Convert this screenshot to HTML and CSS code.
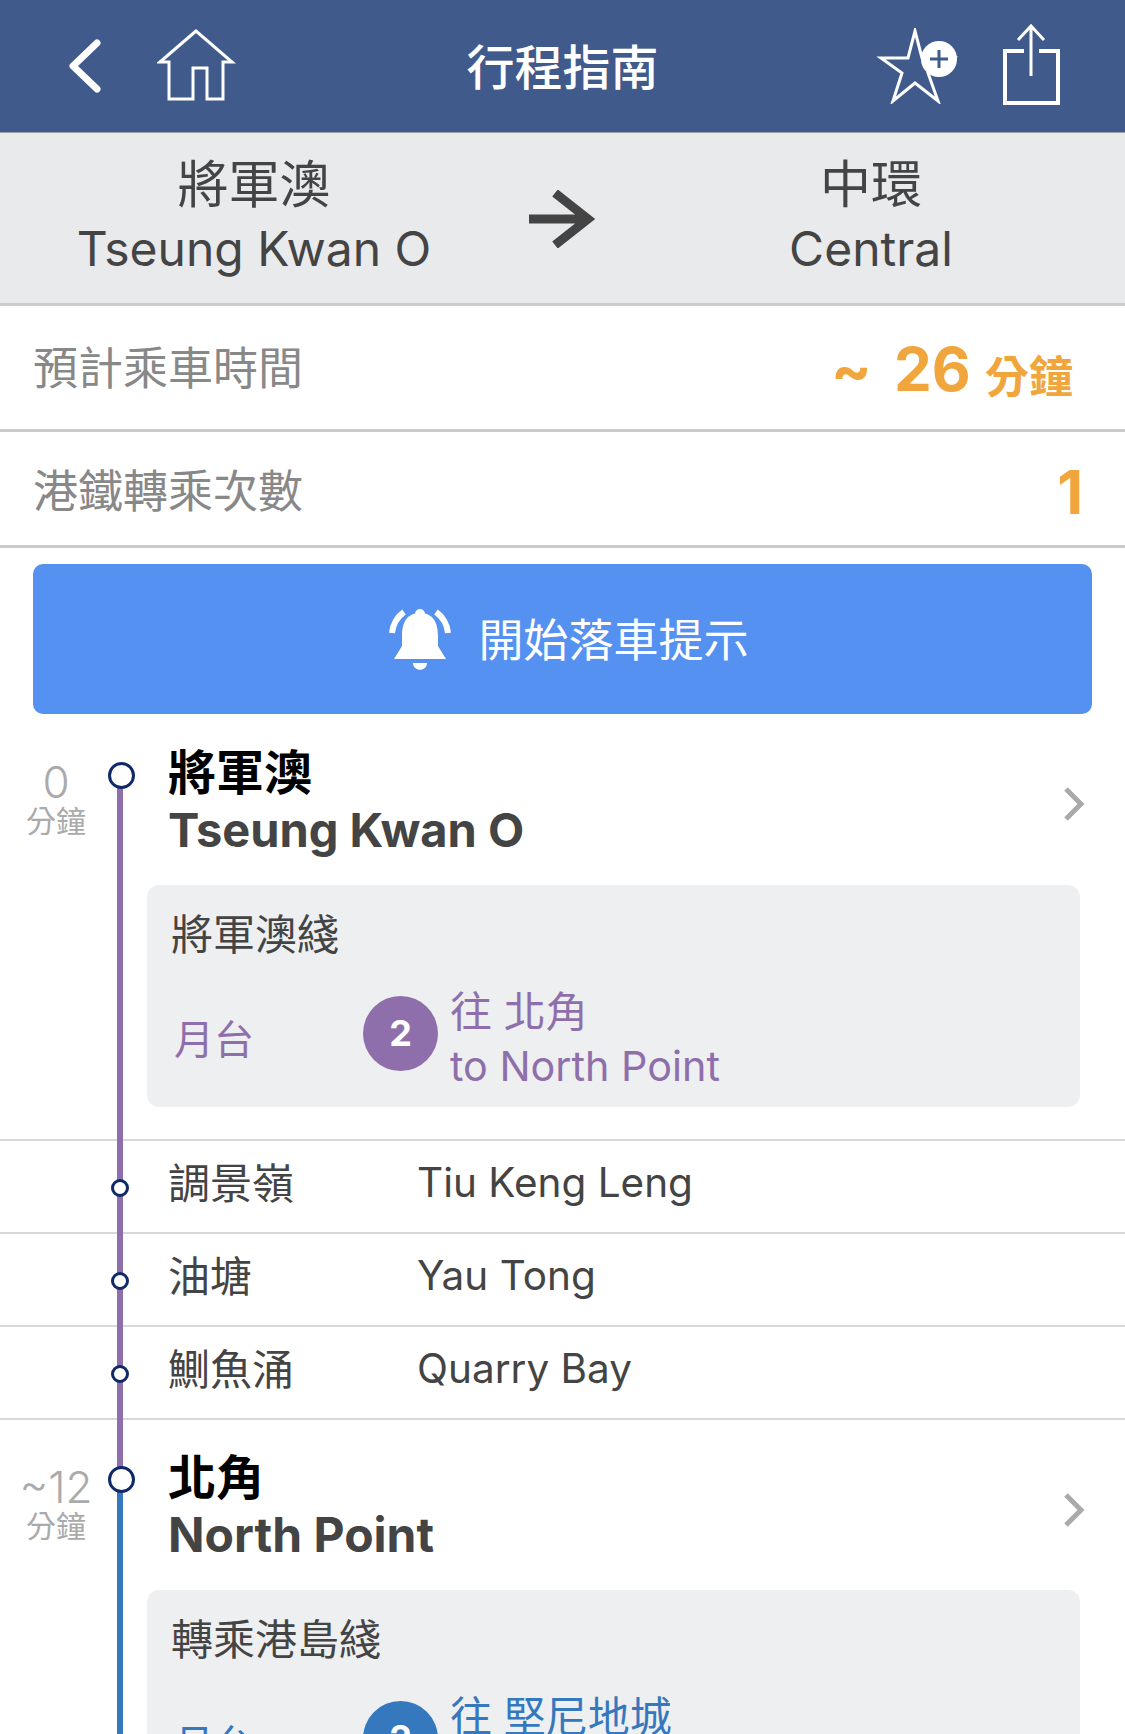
FILE: index.html
```html
<!DOCTYPE html>
<html lang="zh-Hant">
  <head>
    <meta charset="UTF-8" />
    <title>行程指南</title>
    <link rel="stylesheet" href="styles.css">
  </head>
  <body>
    <header class="topbar">
      <div class="topbar-left">
        <svg class="icon-back" width="42" height="56" viewBox="0 0 42 56">
          <path d="M32 5 L8 28 L32 51" fill="none" stroke="#fff" stroke-width="7" stroke-linecap="round" stroke-linejoin="round" />
        </svg>
        <svg class="icon-home" width="84" height="74" viewBox="0 0 84 74">
          <path d="M39 3 L3 34 H12 V71 H36 V40 H50 V71 H66 V34 H75 Z" fill="none" stroke="#fff" stroke-width="3" />
        </svg>
      </div>
      <h1 class="topbar-title">行程指南</h1>
      <div class="topbar-right">
        <svg class="icon-star" width="83" height="76" viewBox="0 0 83 76">
          <path d="M40 3 L47 30 H78 L53 45 L63 73 L40 55 L18 73 L27 45 L6 30 H33 Z" fill="none" stroke="#fff" stroke-width="3" />
          <circle cx="64" cy="31" r="18" fill="#fff" />
          <path d="M55 31 H73 M64 22 V40" fill="none" stroke="#3f5a8b" stroke-width="3" />
        </svg>
        <svg class="icon-share" width="63" height="86" viewBox="0 0 63 86">
          <path d="M24 29 H5 V81 H58 V29 H39" fill="none" stroke="#fff" stroke-width="4" />
          <path d="M31 4 V54 M18 18 L31 4 L44 18" fill="none" stroke="#fff" stroke-width="3" />
        </svg>
      </div>
    </header>

    <section class="route">
      <div class="route-stop"><span class="route-zh">將軍澳</span><br>Tseung Kwan O</div>
      <svg class="route-arrow" width="70" height="58" viewBox="0 0 70 58">
        <path d="M1 29 H58 M27 3 L60 29 L27 55" fill="none" stroke="#444" stroke-width="9" />
      </svg>
      <div class="route-stop"><span class="route-zh">中環</span><br>Central</div>
    </section>

    <div class="stat stat-time">
      <span class="stat-label">預計乘車時間</span>
      <span class="stat-value"><span class="tilde">~</span> 26 <small>分鐘</small></span>
    </div>
    <div class="stat stat-count">
      <span class="stat-label">港鐵轉乘次數</span>
      <span class="stat-value">1</span>
    </div>

    <div class="alert-wrap">
      <button class="alert-btn">
        <svg width="64" height="68" viewBox="0 0 64 68">
          <circle cx="32" cy="8" r="5" fill="#fff" />
          <path d="M32 7 C18 7 14 18 14 30 V40 L6 53 H58 L50 40 V30 C50 18 46 7 32 7 Z" fill="#fff" />
          <path d="M25 57 H39 C39 66 25 66 25 57 Z" fill="#fff" />
          <path d="M16 6 C9 11 5 18 4 27 M48 6 C55 11 59 18 60 27" fill="none" stroke="#fff" stroke-width="6" />
        </svg>
        <span>開始落車提示</span>
      </button>
    </div>

    <section class="leg leg-purple">
      <div class="station">
        <div class="station-time"><b>0</b><span>分鐘</span></div>
        <div class="dot-big"></div>
        <div class="station-name">將軍澳<br><em>Tseung Kwan O</em></div>
        <svg class="chevron" width="24" height="38" viewBox="0 0 24 38">
          <path d="M4 4 L19 19 L4 34" fill="none" stroke="#aaa" stroke-width="5" />
        </svg>
      </div>
      <div class="card">
        <div class="card-title">將軍澳綫</div>
        <div class="platform">
          <span class="platform-label">月台</span>
          <span class="platform-no">2</span>
          <span class="platform-dest">往 北角<br><em>to North Point</em></span>
        </div>
      </div>
      <ul class="stops">
        <li><i class="dot-small"></i><span class="stop-zh">調景嶺</span><span class="stop-en">Tiu Keng Leng</span></li>
        <li><i class="dot-small"></i><span class="stop-zh">油塘</span><span class="stop-en">Yau Tong</span></li>
        <li><i class="dot-small"></i><span class="stop-zh">鰂魚涌</span><span class="stop-en">Quarry Bay</span></li>
      </ul>
    </section>

    <section class="leg leg-blue">
      <div class="station">
        <div class="station-time"><b>~12</b><span>分鐘</span></div>
        <div class="dot-big"></div>
        <div class="station-name">北角<br><em>North Point</em></div>
        <svg class="chevron" width="24" height="38" viewBox="0 0 24 38">
          <path d="M4 4 L19 19 L4 34" fill="none" stroke="#aaa" stroke-width="5" />
        </svg>
      </div>
      <div class="card">
        <div class="card-title">轉乘港島綫</div>
        <div class="platform">
          <span class="platform-label">月台</span>
          <span class="platform-no">2</span>
          <span class="platform-dest">往 堅尼地城<br><em>to Kennedy Town</em></span>
        </div>
      </div>
    </section>
  </body>
</html>
```

FILE: styles.css
```css
* {
  margin: 0;
  padding: 0;
  box-sizing: border-box;
  font-family: Inter, "Noto Sans CJK TC", sans-serif;
}

html, body {
  height: 1734px;
  overflow: hidden;
  background: white;
}

svg {
  display: block;
  flex: none;
}

.topbar {
  display: grid;
  grid-template-columns: 1fr auto 1fr;
  align-items: center;
  height: 133px;
  background: #3f5a8b;
  border-bottom: 1px solid #9a9da3;
}

.topbar-left {
  display: flex;
  align-items: center;
  gap: 50px;
  padding-left: 65px;
}

.topbar-right {
  display: flex;
  justify-content: flex-end;
  align-items: center;
  gap: 42px;
  padding-right: 62px;
}

.icon-home { margin-top: -2px; }
.icon-star { margin-top: -1px; }
.icon-share { margin-top: -2px; }

.topbar-title {
  padding-bottom: 4px;
  font-size: 48px;
  font-weight: 500;
  color: white;
}

.route {
  display: grid;
  grid-template-columns: 508px 109px 508px;
  align-items: center;
  height: 173px;
  background: #e9eaec;
  border-bottom: 3px solid #cbcbcd;
}

.route-stop {
  padding-bottom: 3px;
  font-size: 48px;
  line-height: 64px;
  color: #444;
  text-align: center;
}

.route-zh {
  font-size: 51px;
  vertical-align: -2px;
}

.route-arrow {
  justify-self: center;
  margin-top: 2px;
}

.stat {
  display: flex;
  justify-content: space-between;
  align-items: center;
  padding-left: 33px;
  border-bottom: 3px solid #cbcbcd;
}

.stat-time {
  height: 126px;
  padding-right: 52px;
}

.stat-count {
  height: 116px;
  padding-right: 42px;
}

.stat-label {
  font-size: 45px;
  color: #888;
}

.stat-time .stat-label {
  padding-bottom: 4px;
}

.stat-value {
  font-size: 60px;
  font-weight: 700;
  color: #f0a63c;
}

.stat-time .stat-value {
  padding-top: 4px;
}

.stat-count .stat-value {
  padding-top: 6px;
}

.stat-value small {
  font-size: 44px;
  vertical-align: -2px;
}

.tilde {
  margin-right: 8px;
}

.alert-wrap {
  padding: 16px 33px 0;
}

.alert-btn {
  display: flex;
  justify-content: center;
  align-items: center;
  gap: 26px;
  width: 100%;
  height: 150px;
  padding-left: 12px;
  border: none;
  border-radius: 10px;
  background: #5591f1;
  color: white;
  font-size: 45px;
}

.alert-btn svg {
  margin-top: 2px;
}

.alert-btn span {
  margin-top: -4px;
}

.leg {
  position: relative;
}

.leg::before {
  content: "";
  position: absolute;
  left: 117px;
  top: 60px;
  bottom: 0;
  width: 6px;
}

.leg-purple::before {
  bottom: -60px;
  background: #8f6fab;
}

.leg-blue::before {
  background: #3578bd;
}

.leg-purple { --line: #8f6fab; }
.leg-blue { --line: #3578bd; }

.station {
  display: flex;
  height: 171px;
}

.leg-blue .station {
  height: 170px;
}

.station-time {
  width: 112px;
  padding-top: 47px;
  text-align: center;
  color: #aaa;
}

.station-time b {
  display: block;
  font-size: 44px;
  font-weight: 300;
  line-height: 43px;
}

.station-time span {
  display: block;
  font-size: 30px;
  line-height: 34px;
}

.leg-blue .station-time {
  padding-top: 46px;
}

.dot-big {
  position: relative;
  z-index: 1;
  width: 27px;
  height: 27px;
  margin: 48px 0 0 -4px;
  border: 3px solid #0f2a66;
  border-radius: 50%;
  background: white;
}

.leg-blue .dot-big {
  margin-top: 46px;
}

.station-name {
  flex: 1;
  margin-left: 33px;
  padding-top: 30px;
  font-size: 48px;
  font-weight: 700;
  line-height: 57px;
  color: #000;
}

.leg-blue .station-name {
  padding-top: 29px;
}

.station-name em {
  font-size: 47px;
  font-style: normal;
  color: #444;
}

.leg-blue .station-name em {
  font-size: 48px;
}

.chevron {
  margin: 71px 39px 0 0;
}

.card {
  position: relative;
  width: 933px;
  margin-left: 147px;
  padding: 22px 24px 14px;
  border-radius: 12px;
  background: #eeeff1;
}

.card-title {
  font-size: 42px;
  line-height: 56px;
  color: #444;
}

.platform {
  display: flex;
  align-items: center;
  margin-top: 22px;
  color: var(--line);
  font-size: 42px;
  line-height: 54px;
}

.platform-label {
  width: 192px;
  padding: 2px 0 0 3px;
  font-size: 40px;
}

.platform-no {
  display: flex;
  justify-content: center;
  align-items: center;
  width: 75px;
  height: 75px;
  margin-top: -12px;
  border-radius: 50%;
  background: var(--line);
  color: white;
  font-size: 36px;
  font-weight: 700;
}

.platform-dest {
  margin-left: 12px;
}

.platform-dest em {
  font-size: 41.3px;
  font-style: normal;
}

.stops {
  list-style: none;
  margin-top: 32px;
}

.stops li {
  display: flex;
  align-items: center;
  height: 93px;
  border-top: 2px solid #d8d8da;
  color: #444;
  font-size: 42px;
}

.stops li:last-child {
  height: 95px;
  border-bottom: 2px solid #d8d8da;
}

.dot-small {
  position: relative;
  z-index: 1;
  width: 18px;
  height: 18px;
  margin: 2px 0 0 111px;
  border: 3px solid #0f2a66;
  border-radius: 50%;
  background: white;
}

.stop-zh {
  width: 249px;
  margin: -12px 0 0 39px;
}

.stop-en {
  margin-top: -8px;
  font-size: 40.5px;
}
```
